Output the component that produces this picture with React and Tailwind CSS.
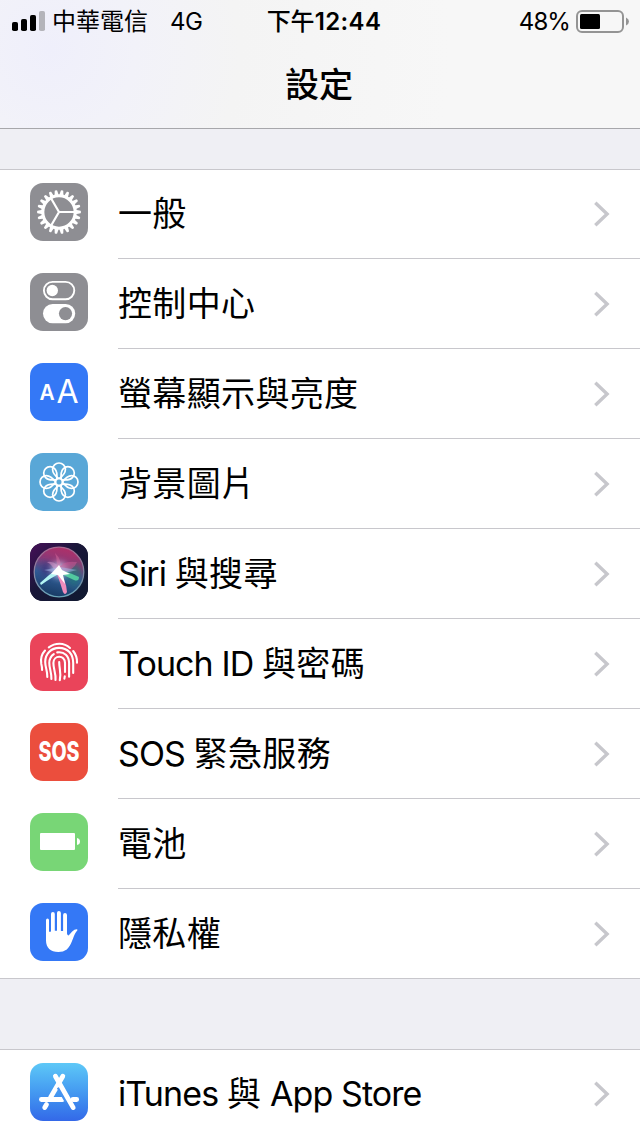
const LINE = "stroke-white fill-none";

function Tile({ className, children }) {
    return (
        <svg viewBox="0 0 58 58" className={`size-[58px] shrink-0 rounded-[13px] ${className}`}>
            {children}
        </svg>
    );
}

function GearIcon() {
    const teeth = Array.from({ length: 22 }, (_, i) => (i * 360) / 22);
    return (
        <Tile className="bg-[#8e8e93]">
            <g transform="translate(29 29)" className="fill-white">
                {teeth.map(a => (
                    <path key={a} d="M16 -2L17.8 -1.9L21.6 -1.2Q22.5 0 21.6 1.2L17.8 1.9L16 2Z" transform={`rotate(${a})`} />
                ))}
                <circle r="16.2" className={LINE} strokeWidth="3.1" />
                <path d="M0 0H16M0 0L-8 -13.8M0 0L-8 13.8" className={LINE} strokeWidth="2.2" />
            </g>
        </Tile>
    );
}

function TogglesIcon() {
    return (
        <Tile className="bg-[#8e8e93]">
            <rect x="13.9" y="8.9" width="30.4" height="17.4" rx="8.7" className={LINE} strokeWidth="1.9" />
            <circle cx="22.3" cy="17.5" r="5.7" fill="#fff" />
            <rect x="13" y="31" width="32.2" height="19.2" rx="9.6" fill="#fff" />
            <circle cx="35.5" cy="40.6" r="6.6" fill="#8e8e93" />
        </Tile>
    );
}

function DisplayIcon() {
    return (
        <Tile className="bg-[#3478f6] fill-white font-['Inter']">
            <text x="9.6" y="37" fontSize="20.8" fontWeight="600">A</text>
            <text x="26.4" y="40" fontSize="32" fontWeight="400">A</text>
        </Tile>
    );
}

function WallpaperIcon() {
    return (
        <Tile className="bg-[#59a7d7]">
            <g transform="translate(29 29)" className={LINE} strokeWidth="1.7">
                {[0, 45, 90, 135, 180, 225, 270, 315].map(a => (
                    <path key={a} d="M0 -3.4C-5 -7 -6.4 -9.5 -6.4 -12.6A6.4 6.4 0 0 1 6.4 -12.6C6.4 -9.5 5 -7 0 -3.4Z" transform={`rotate(${a})`} />
                ))}
                <circle r="3.5" />
            </g>
        </Tile>
    );
}

function SiriIcon() {
    return (
        <Tile className="bg-[#15142f]">
            <defs>
                <linearGradient id="siriBack" x1="0" y1="0" x2="1" y2="1">
                    <stop offset="0" stopColor="#471058" />
                    <stop offset="0.45" stopColor="#181638" />
                    <stop offset="1" stopColor="#101a30" />
                </linearGradient>
                <linearGradient id="siriOrb" x1="0.6" y1="0" x2="0.35" y2="1">
                    <stop offset="0" stopColor="#b02f68" />
                    <stop offset="0.3" stopColor="#8c3a78" />
                    <stop offset="0.58" stopColor="#305d96" />
                    <stop offset="1" stopColor="#173962" />
                </linearGradient>
                <linearGradient id="siriRing" x1="0" y1="0" x2="0" y2="1">
                    <stop offset="0" stopColor="#a9668f" />
                    <stop offset="1" stopColor="#6aa6ba" />
                </linearGradient>
                <filter id="soft" x="-50%" y="-50%" width="200%" height="200%">
                    <feGaussianBlur stdDeviation="0.7" />
                </filter>
                <filter id="glow" x="-50%" y="-50%" width="200%" height="200%">
                    <feGaussianBlur stdDeviation="3" />
                </filter>
            </defs>
            <rect width="58" height="58" fill="url(#siriBack)" />
            <circle cx="29" cy="29" r="24.8" fill="url(#siriOrb)" stroke="url(#siriRing)" strokeWidth="1.3" />
            <path d="M32 29L48 20Q55 34 44 45Z" fill="#247b75" opacity="0.7" filter="url(#glow)" />
            <path d="M29 30L14 17Q9 25 12 34Z" fill="#3d347e" opacity="0.8" filter="url(#glow)" />
            <circle cx="29" cy="27" r="8" fill="#dbe6ff" opacity="0.7" filter="url(#glow)" />
            <g filter="url(#soft)">
                <path d="M17 19Q27 17 31 29L25 29Q23 22 17 19Z" fill="#d99acb" opacity="0.5" />
                <path d="M25 10Q33 17 30 29L26 28Q28 19 25 10Z" fill="#f27cab" opacity="0.35" />
                <path d="M29 26Q32 17 47 19Q44 27 32 30Z" fill="#d25a95" opacity="0.5" />
                <path d="M14 27L30 24L47 27L31 31Z" fill="#a5bced" opacity="0.5" />
                <path d="M31 27Q43 31 49 34Q49 39 44 37L29 30Z" fill="#57d7a4" opacity="0.85" />
                <path d="M29 28Q36 36 37 49Q35 53 33 49Q30 39 27 31Z" fill="#ef8cbc" />
                <path d="M10 40Q18 32 29 25L31 30Q22 34 11 42Z" fill="#b3f5f3" />
                <path d="M21 31L29 22L32 27L40 31L33 32L35 41L28 32Z" fill="#fff" />
            </g>
        </Tile>
    );
}

function TouchIdIcon() {
    return (
        <Tile className="bg-[#ea445a]">
            <g className={LINE} strokeWidth="2.1" strokeLinecap="round">
                <path d="M18.8 14.3Q23.5 10.7 29.5 10.7T40 15" />
                <path d="M15 17.5C10.8 22 10.7 27.5 11.3 31Q12.2 34.5 12.1 37" />
                <path d="M43.2 18C46 21.5 47.2 25.5 47 29.7" />
                <path d="M17.3 44C17.5 38 15.2 34 15.2 29C15.2 20.5 21.5 14.9 29 14.9C37.8 14.9 43.2 21 43.2 30V40" />
                <path d="M21.4 46C21.8 40 19.3 36 19.3 30C19.3 26 21 23 23.8 21.1" />
                <path d="M27.2 19.4C34.5 18.2 39 23.4 39.1 30V43.8" />
                <path d="M25.5 47C26 39.5 23.4 36.5 23.4 30C23.4 22 35 21.5 35 30V39" />
                <path d="M29.8 47.2C31.5 40 29.2 36 29.2 29" />
                <path d="M34.8 43.3L34.4 45.6" />
            </g>
        </Tile>
    );
}

function SosIcon() {
    return (
        <Tile className="bg-[#eb4e3d] fill-white font-['Inter']">
            <text transform="translate(29 38.4) scale(0.74 1)" fontSize="26.5" fontWeight="800" textAnchor="middle">SOS</text>
        </Tile>
    );
}

function BatteryIcon() {
    return (
        <Tile className="bg-[#78d676] fill-white">
            <rect x="10" y="20" width="35" height="17" rx="1" />
            <path d="M47 25Q50 25.5 50 28.5T47 32Z" />
        </Tile>
    );
}

function HandIcon() {
    return (
        <Tile className="bg-[#3478f6] fill-white">
            <path d="M16 17.2Q16 15.6 17.5 15.6T19 17.2V28.8Q20 29 21 28.4V10.9Q21 9 22.9 9T24.8 10.9V27.7H27V9.9Q27 8 28.9 8T30.9 9.9V27.9H33.1V11.9Q33.1 10 35 10T37 11.9V30.6Q37.3 32.8 38.8 32.3L42.2 28.6Q44.8 26 47.4 26.4Q47.6 27.5 46.2 28.8C42.7 34 42 42 36.8 46.4Q33.2 49 28.4 49C20.5 49 16 44.5 16 37.5Z" />
        </Tile>
    );
}

function AppStoreIcon() {
    return (
        <Tile className="bg-linear-to-b from-[#5ec8f7] to-[#3468e8]">
            <g className={LINE} strokeWidth="4.8" strokeLinecap="round">
                <path d="M32.8 13.2L20.5 34.5" />
                <path d="M11.4 36.5H32.5M43 36.5H46.7" />
                <path d="M16.5 41.6L14.7 44.6" />
            </g>
            <path d="M28.2 24.5L36 38.5" stroke="#4793f0" strokeWidth="3" fill="none" />
            <path d="M25.4 13.2L43.2 44.6" className={LINE} strokeWidth="4.8" strokeLinecap="round" />
        </Tile>
    );
}

const MAIN_ROWS = [
    { icon: GearIcon, label: "一般" },
    { icon: TogglesIcon, label: "控制中心" },
    { icon: DisplayIcon, label: "螢幕顯示與亮度" },
    { icon: WallpaperIcon, label: "背景圖片" },
    { icon: SiriIcon, label: "Siri 與搜尋" },
    { icon: TouchIdIcon, label: "Touch ID 與密碼" },
    { icon: SosIcon, label: "SOS 緊急服務" },
    { icon: BatteryIcon, label: "電池" },
    { icon: HandIcon, label: "隱私權" },
];

const STORE_ROWS = [{ icon: AppStoreIcon, label: "iTunes 與 App Store" }];

// Latin runs are set tighter than the Chinese ones
function Label({ text }) {
    const runs = text.match(/[\x20-\x7e]+|[^\x20-\x7e]+/g);
    return (
        <span className="text-[34px] leading-[48px] whitespace-pre">
            {runs.map((run, i) => (
                <span key={i} className={/[a-z]/i.test(run) ? "tracking-[-0.9px]" : "tracking-[0.35px]"}>{run}</span>
            ))}
        </span>
    );
}

function SettingsList({ rows }) {
    return (
        <ul className="bg-white border-y border-[#c8c7cc]">
            {rows.map(({ icon: Icon, label }) => (
                // first and last rows share their edge with the list border
                <li key={label} className="group flex h-[90px] pl-[30px] gap-[30px] first:-mt-px last:-mb-px">
                    <div className="pt-[14px]">
                        <Icon />
                    </div>
                    <div className="flex flex-1 items-center justify-between pr-[30px] border-b border-[#c8c7cc] group-last:border-transparent">
                        <Label text={label} />
                        <svg viewBox="0 0 16 26" className="w-4 h-[26px] fill-none stroke-[#c7c7cc]" strokeWidth="3.4">
                            <path d="M1.3 1.7L13.1 13L1.3 24.3" />
                        </svg>
                    </div>
                </li>
            ))}
        </ul>
    );
}

function StatusBar() {
    return (
        <div className="grid grid-cols-[1fr_auto_1fr] items-center h-10 pl-3 pr-[11px] text-2xl leading-10">
            <div className="flex items-center">
                <svg viewBox="0 0 33 20" className="w-[33px] h-5 mr-[7px]">
                    <rect y="11" width="6" height="9" rx="1.8" />
                    <rect x="9" y="8" width="6" height="12" rx="1.8" />
                    <rect x="18" y="4" width="6" height="16" rx="1.8" />
                    <rect x="27" width="6" height="20" rx="1.8" fill="#b4b4ba" />
                </svg>
                <span className="pt-0.5">中華電信</span>
                <span className="ml-[22px] pt-0.5 tracking-[-0.4px]">4G</span>
            </div>
            <span className="pt-0.5 pl-[7px] whitespace-nowrap">
                <span className="font-medium">下午</span>
                <span className="font-semibold tracking-[0.4px]">12:44</span>
            </span>
            <div className="flex items-center justify-end gap-1.5">
                <span className="pt-0.5 tracking-[-0.9px]">48%</span>
                <svg viewBox="0 0 53 23" className="w-[53px] h-[23px]">
                    <rect x="1" y="1" width="46" height="21" rx="5" fill="none" stroke="#949494" strokeWidth="2" />
                    <rect x="4" y="4" width="20" height="15" rx="1.5" />
                    <path d="M50 7.5Q53 9 53 11.5T50 15.5Z" fill="#949494" />
                </svg>
            </div>
        </div>
    );
}

export default function App() {
    return (
        <div className="w-[640px] h-[1136px] overflow-hidden bg-[#efeff4] text-black font-['Inter','Noto_Sans_CJK_TC',sans-serif]">
            <header className="h-[129px] border-b border-[#a7a7ab] bg-[radial-gradient(circle_at_50px_50px,#efeffb_0px,#f2f2f9_85px,#f4f4f4_190px,#f7f7f7_400px)]">
                <StatusBar />
                <h1 className="h-[88px] pt-px pr-0.5 text-center text-[34px] leading-[88px] font-medium">設定</h1>
            </header>
            <main className="flex flex-col gap-[70px] pt-10">
                <SettingsList rows={MAIN_ROWS} />
                <SettingsList rows={STORE_ROWS} />
            </main>
        </div>
    );
}
